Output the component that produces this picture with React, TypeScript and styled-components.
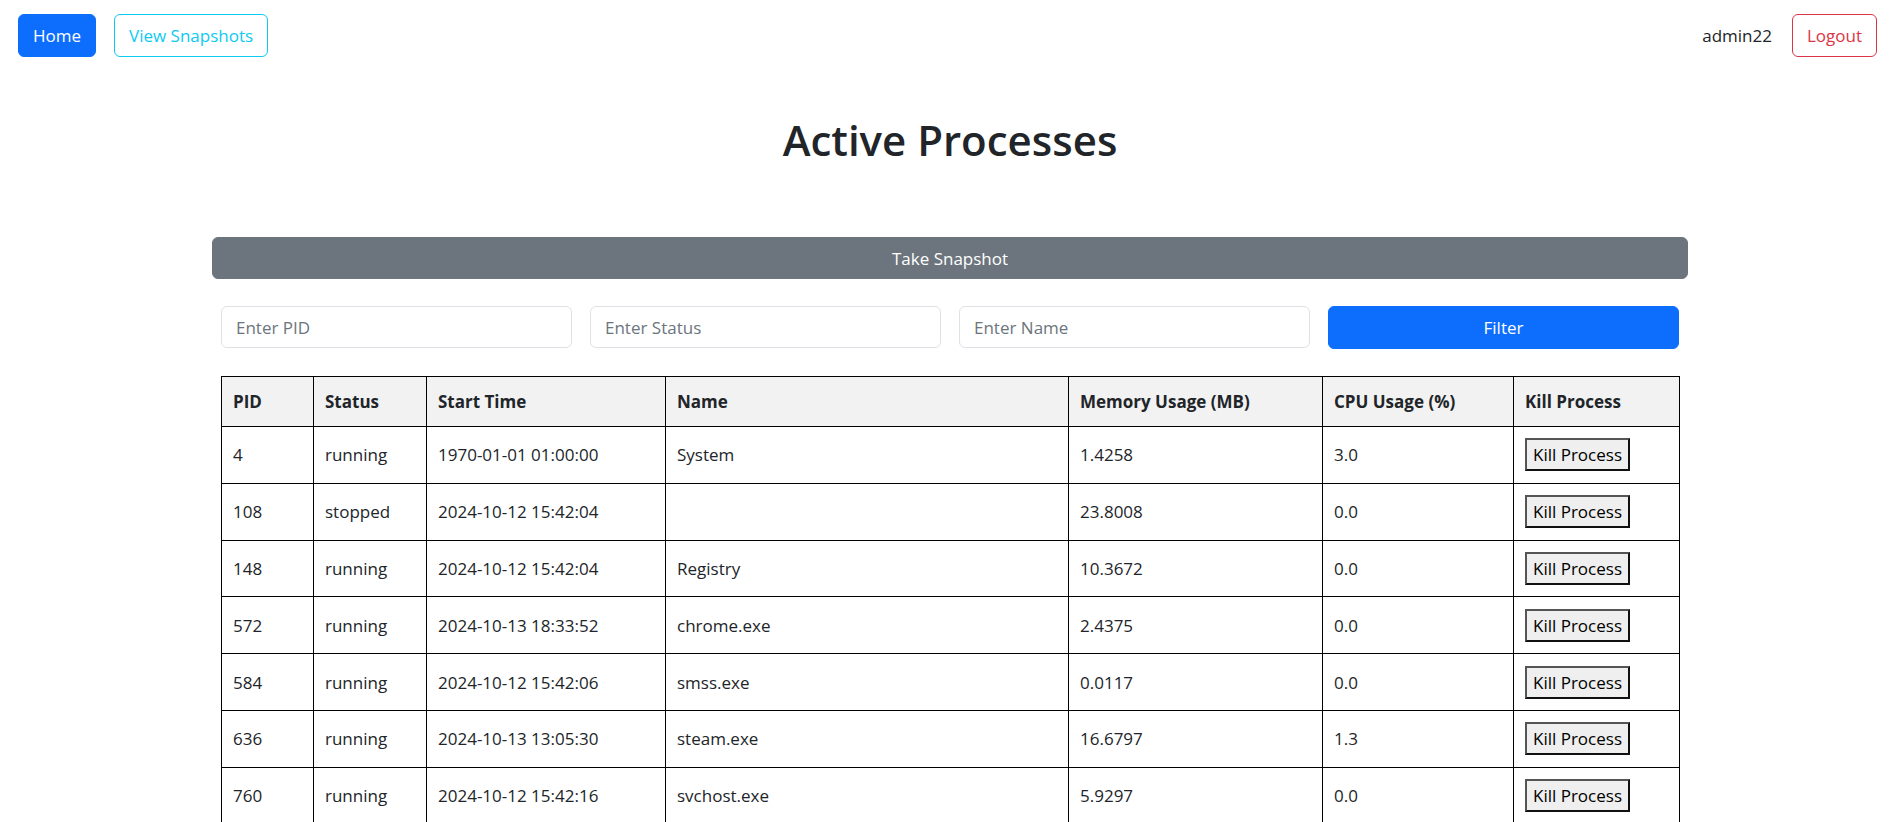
import React from "react";
import styled, { createGlobalStyle, css } from "styled-components";

const GlobalStyle = createGlobalStyle`
  html, body {
    margin: 0;
    padding: 0;
    background: #ffffff;
    color: #212529;
    font-family: "Open Sans", "Noto Sans", "Liberation Sans", sans-serif;
    font-size: 17px;
  }
  * { box-sizing: border-box; }
`;

const Nav = styled.nav`
  display: flex;
  justify-content: space-between;
  align-items: center;
  padding: 14px 16px 0 18px;
`;

const NavGroup = styled.div<{ $gap: number }>`
  display: flex;
  align-items: center;
  gap: ${(p) => p.$gap}px;
`;

type Variant = "primary" | "outline-info" | "outline-danger";

const NavButton = styled.button<{ $variant: Variant }>`
  height: 43px;
  padding: 0 14px;
  border-radius: 6px;
  border: 1px solid;
  font-family: inherit;
  font-size: 17px;
  line-height: 1;
  cursor: pointer;
  ${(p) =>
    p.$variant === "primary"
      ? css`
          background: #0d6efd;
          border-color: #0d6efd;
          color: #ffffff;
        `
      : p.$variant === "outline-info"
      ? css`
          background: transparent;
          border-color: #0dcaf0;
          color: #0dcaf0;
        `
      : css`
          background: transparent;
          border-color: #dc3545;
          color: #dc3545;
        `}
`;

const UserName = styled.span`
  font-size: 17px;
  color: #212529;
`;

const Container = styled.main`
  width: 1476px;
  margin-left: 212px;
`;

const Title = styled.h1`
  margin: 57px 0 0;
  text-align: center;
  font-size: 42px;
  line-height: 52px;
  font-weight: 600;
  color: #212529;
`;

const SnapshotButton = styled.button`
  display: block;
  width: 100%;
  height: 42px;
  margin-top: 71px;
  border: 1px solid #6c757d;
  border-radius: 6px;
  background: #6c757d;
  color: #ffffff;
  font-family: inherit;
  font-size: 17px;
  cursor: pointer;
`;

const FilterRow = styled.div`
  display: grid;
  grid-template-columns: repeat(4, 1fr);
  gap: 18px;
  margin: 27px 9px 0;
`;

const FilterInput = styled.input`
  height: 42px;
  padding: 0 14px;
  border: 1px solid #dee2e6;
  border-radius: 6px;
  font-family: inherit;
  font-size: 17px;
  color: #212529;
  background: #ffffff;
  &::placeholder {
    color: #6c757d;
  }
`;

const FilterButton = styled.button`
  height: 43px;
  border: 1px solid #0d6efd;
  border-radius: 6px;
  background: #0d6efd;
  color: #ffffff;
  font-family: inherit;
  font-size: 17px;
  cursor: pointer;
`;

const Table = styled.table`
  width: 1458px;
  margin: 27px 9px 0;
  border-collapse: collapse;
  table-layout: fixed;
`;

const Th = styled.th<{ $w: number }>`
  width: ${(p) => p.$w}px;
  padding: 12px 11px;
  line-height: 25px;
  text-align: left;
  font-weight: 700;
  font-size: 17px;
  background: #f2f2f2;
  border: 1px solid #000000;
`;

const Td = styled.td`
  height: 56.8px;
  padding: 0 11px;
  line-height: 25px;
  font-size: 17px;
  border: 1px solid #000000;
  vertical-align: middle;
`;

const KillButton = styled.button`
  display: inline-block;
  padding: 2px 6px;
  line-height: 25px;
  font-family: inherit;
  font-size: 17px;
  color: #000000;
  background: #efefef;
  border: 2px solid;
  border-color: #555555 #111111 #111111 #555555;
  cursor: pointer;
`;

const columns = [
  { label: "PID", w: 92 },
  { label: "Status", w: 113 },
  { label: "Start Time", w: 239 },
  { label: "Name", w: 403 },
  { label: "Memory Usage (MB)", w: 254 },
  { label: "CPU Usage (%)", w: 191 },
  { label: "Kill Process", w: 166 },
];

const processes = [
  { pid: 4, status: "running", start: "1970-01-01 01:00:00", name: "System", mem: "1.4258", cpu: "3.0" },
  { pid: 108, status: "stopped", start: "2024-10-12 15:42:04", name: "", mem: "23.8008", cpu: "0.0" },
  { pid: 148, status: "running", start: "2024-10-12 15:42:04", name: "Registry", mem: "10.3672", cpu: "0.0" },
  { pid: 572, status: "running", start: "2024-10-13 18:33:52", name: "chrome.exe", mem: "2.4375", cpu: "0.0" },
  { pid: 584, status: "running", start: "2024-10-12 15:42:06", name: "smss.exe", mem: "0.0117", cpu: "0.0" },
  { pid: 636, status: "running", start: "2024-10-13 13:05:30", name: "steam.exe", mem: "16.6797", cpu: "1.3" },
  { pid: 760, status: "running", start: "2024-10-12 15:42:16", name: "svchost.exe", mem: "5.9297", cpu: "0.0" },
];

export default function App() {
  return (
    <>
      <GlobalStyle />
      <Nav>
        <NavGroup $gap={18}>
          <NavButton $variant="primary">Home</NavButton>
          <NavButton $variant="outline-info">View Snapshots</NavButton>
        </NavGroup>
        <NavGroup $gap={20}>
          <UserName>admin22</UserName>
          <NavButton $variant="outline-danger">Logout</NavButton>
        </NavGroup>
      </Nav>
      <Container>
        <Title>Active Processes</Title>
        <SnapshotButton>Take Snapshot</SnapshotButton>
        <FilterRow>
          <FilterInput placeholder="Enter PID" />
          <FilterInput placeholder="Enter Status" />
          <FilterInput placeholder="Enter Name" />
          <FilterButton>Filter</FilterButton>
        </FilterRow>
        <Table>
          <thead>
            <tr>
              {columns.map((c) => (
                <Th key={c.label} $w={c.w}>
                  {c.label}
                </Th>
              ))}
            </tr>
          </thead>
          <tbody>
            {processes.map((p) => (
              <tr key={p.pid}>
                <Td>{p.pid}</Td>
                <Td>{p.status}</Td>
                <Td>{p.start}</Td>
                <Td>{p.name}</Td>
                <Td>{p.mem}</Td>
                <Td>{p.cpu}</Td>
                <Td>
                  <KillButton>Kill Process</KillButton>
                </Td>
              </tr>
            ))}
          </tbody>
        </Table>
      </Container>
    </>
  );
}
